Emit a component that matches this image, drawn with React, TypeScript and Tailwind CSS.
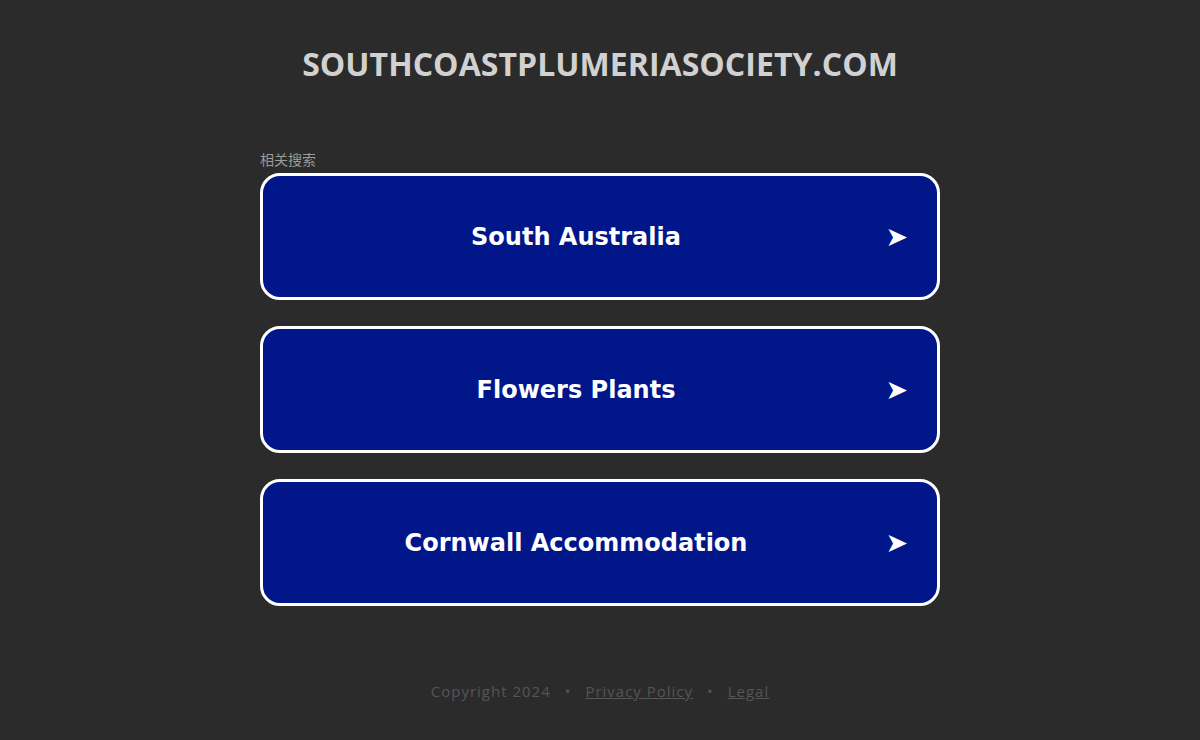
const items = ['South Australia', 'Flowers Plants', 'Cornwall Accommodation']

export default function App() {
  return (
    <div className="min-h-[740px] bg-[#2b2b2b] flex flex-col items-center" style={{ fontFamily: '"Open Sans", sans-serif' }}>
      <h1 className="mt-[42px] text-[32px] leading-[44px] font-bold text-[#d1d1d1] tracking-[0.05px]">
        SOUTHCOASTPLUMERIASOCIETY.COM
      </h1>

      <div className="mt-[64px] w-[680px]">
        <div
          className="text-[14px] leading-[18px] text-[#9a9a9a] mb-[5px]"
          style={{ fontFamily: '"Noto Sans CJK SC", sans-serif' }}
        >
          相关搜索
        </div>
        <div className="flex flex-col gap-[26px]">
          {items.map((label) => (
            <a
              key={label}
              href="#"
              className="relative h-[127px] rounded-[20px] border-[3px] border-white bg-[#011689] flex items-center justify-center pr-[48px] text-white"
            >
              <span className="text-[24px] font-bold" style={{ fontFamily: '"DejaVu Sans", sans-serif' }}>
                {label}
              </span>
              <span
                className="absolute right-[29px] text-[27px] leading-none"
                style={{ fontFamily: '"DejaVu Sans", sans-serif' }}
              >
                ➤
              </span>
            </a>
          ))}
        </div>
      </div>

      <div className="mt-[74px] flex items-center gap-[14px] text-[15px] tracking-[1px] text-[#555555]">
        <span>Copyright 2024</span>
        <span>•</span>
        <a href="#" className="underline">Privacy Policy</a>
        <span>•</span>
        <a href="#" className="underline">Legal</a>
      </div>
    </div>
  )
}
